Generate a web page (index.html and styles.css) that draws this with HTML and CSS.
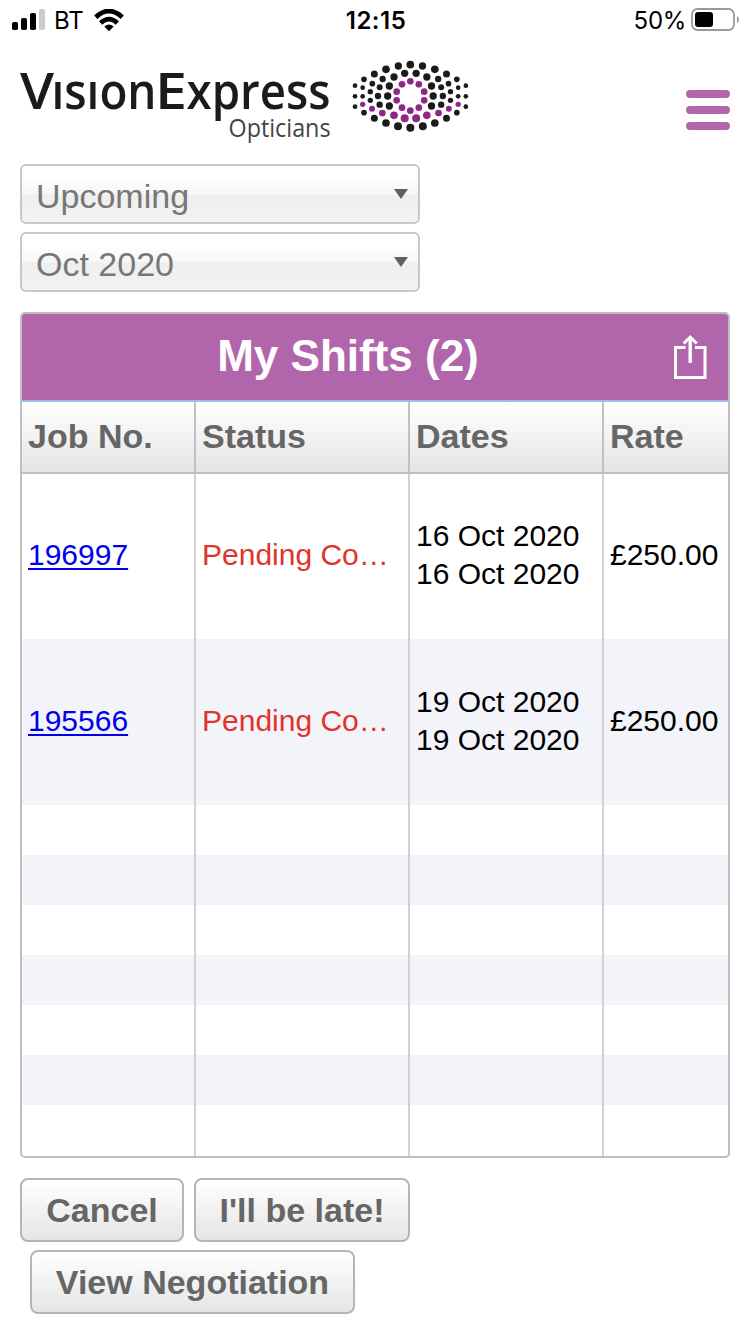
FILE: index.html
```html
<!DOCTYPE html>
<html lang="en">
<head>
<meta charset="utf-8">
<title>My Shifts</title>
<link rel="stylesheet" href="styles.css">
</head>
<body>
<div class="status-bar">
  <div class="carrier">
    <svg class="signal" width="34" height="22" viewBox="0 0 34 22">
      <rect x="0" y="13" width="6" height="8" rx="1.8"/>
      <rect x="9" y="9" width="6" height="12" rx="1.8"/>
      <rect x="18" y="4" width="6" height="17" rx="1.8"/>
      <rect x="27" y="0" width="6" height="21" rx="1.8" fill="#ccc"/>
    </svg>
    <span class="carrier-name">BT</span>
    <svg class="wifi" width="30" height="23" viewBox="0 0 30 23">
      <path d="M1.800 8.200 Q15 -4 28.200 8.200" fill="none" stroke="#000" stroke-width="4.800"/>
      <path d="M6.600 14 Q15 6.400 23.400 14" fill="none" stroke="#000" stroke-width="4.600"/>
      <path d="M10.300 17.600 Q15 13.600 19.700 17.600 L15 22.300 Z"/>
    </svg>
  </div>
  <span class="clock">12:15</span>
  <div class="power">
    <span class="percent">50%</span>
    <svg class="battery" width="49" height="24" viewBox="0 0 49 24">
      <rect x="1" y="1" width="42" height="21" rx="5.500" fill="none" stroke="#999" stroke-width="1.800"/>
      <rect x="4" y="4" width="18" height="15" rx="3"/>
      <path d="M46 8 Q48 9 48 11.500 Q48 14 46 15 Z" fill="#999"/>
    </svg>
  </div>
</div>

<header class="brand-bar">
  <svg class="brand" width="460" height="95" viewBox="0 0 460 95">
    <g class="brand-name">
      <text x="10" y="54" textLength="34" lengthAdjust="spacingAndGlyphs">V</text>
      <text x="41.500" y="54" textLength="105" lengthAdjust="spacingAndGlyphs">ısıon</text>
      <text x="145" y="54" textLength="32" lengthAdjust="spacingAndGlyphs">E</text>
      <text x="176.500" y="54" textLength="144" lengthAdjust="spacingAndGlyphs">xpress</text>
    </g>
    <text class="brand-sub" x="218.500" y="81.500" textLength="102" lengthAdjust="spacingAndGlyphs">Opticians</text>
    <defs>
      <g id="eye-half">
        <g fill="#1c1b1c">
          <circle cx="160" cy="33" r="11"/><circle cx="123" cy="43" r="11.500"/><circle cx="88" cy="57" r="10.500"/>
          <circle cx="57" cy="73" r="8.500"/><circle cx="30" cy="92" r="7"/><circle cx="30" cy="124" r="7"/>
          <circle cx="30" cy="155" r="7"/><circle cx="57" cy="173" r="8.500"/><circle cx="88" cy="190" r="10.500"/>
          <circle cx="123" cy="204" r="11.500"/><circle cx="159" cy="214" r="12"/>
          <circle cx="179" cy="55" r="11"/><circle cx="147" cy="66" r="11"/><circle cx="113" cy="72" r="9.500"/>
          <circle cx="82" cy="86" r="8.500"/><circle cx="53" cy="98" r="7"/><circle cx="53" cy="124" r="7"/>
          <circle cx="133" cy="93" r="11"/><circle cx="104" cy="97" r="9"/><circle cx="76" cy="110" r="8"/>
          <circle cx="99" cy="123" r="9.500"/><circle cx="128" cy="123" r="11"/><circle cx="76" cy="136" r="8"/>
          <circle cx="104" cy="149" r="9.500"/><circle cx="133" cy="153" r="11"/>
        </g>
        <g fill="#8d2885">
          <circle cx="53" cy="148" r="8"/><circle cx="81" cy="161" r="9"/><circle cx="112" cy="174" r="10"/>
          <circle cx="147" cy="181" r="11.500"/><circle cx="179" cy="190" r="12"/>
          <circle cx="171" cy="88" r="10"/><circle cx="155" cy="110" r="10"/>
          <circle cx="155" cy="136" r="10"/><circle cx="171" cy="158" r="10"/>
        </g>
      </g>
    </defs>
    <g transform="translate(335 0) scale(.33333)">
      <use href="#eye-half"/>
      <use href="#eye-half" transform="translate(392.500 0) scale(-1 1)"/>
      <circle cx="196" cy="29" r="11.500" fill="#1c1b1c"/><circle cx="196" cy="218" r="12" fill="#1c1b1c"/>
      <circle cx="196" cy="79" r="10" fill="#8d2885"/><circle cx="196" cy="167" r="10" fill="#8d2885"/>
    </g>
  </svg>
  <div class="menu"><i></i><i></i><i></i></div>
</header>

<div class="filters">
  <div class="select"><span>Upcoming</span><b class="caret"></b></div>
  <div class="select"><span>Oct 2020</span><b class="caret"></b></div>
</div>

<section class="panel">
  <div class="panel-title">
    <h1>My Shifts (2)</h1>
    <svg class="share" width="34" height="46" viewBox="0 0 34 46" fill="none" stroke="#fff" stroke-width="3">
      <path d="M11.500 13.500 H1.500 V43.500 H31 V13.500 H21"/>
      <path d="M16.200 29 V3" stroke-width="3.400"/>
      <path d="M9.700 9.500 L16.200 3 L22.700 9.500"/>
    </svg>
  </div>
  <div class="row head"><div>Job No.</div><div>Status</div><div>Dates</div><div>Rate</div></div>
  <div class="row shift">
    <div><a href="#">196997</a></div><div class="pending">Pending Co…</div>
    <div class="dates"><span>16 Oct 2020</span><span>16 Oct 2020</span></div><div class="rate">£250.00</div>
  </div>
  <div class="row shift alt">
    <div><a href="#">195566</a></div><div class="pending">Pending Co…</div>
    <div class="dates"><span>19 Oct 2020</span><span>19 Oct 2020</span></div><div class="rate">£250.00</div>
  </div>
  <div class="row blank"><div></div><div></div><div></div><div></div></div>
  <div class="row blank alt"><div></div><div></div><div></div><div></div></div>
  <div class="row blank"><div></div><div></div><div></div><div></div></div>
  <div class="row blank alt"><div></div><div></div><div></div><div></div></div>
  <div class="row blank"><div></div><div></div><div></div><div></div></div>
  <div class="row blank alt"><div></div><div></div><div></div><div></div></div>
  <div class="row blank last"><div></div><div></div><div></div><div></div></div>
</section>

<div class="actions">
  <button class="btn cancel">Cancel</button>
  <button class="btn late">I'll be late!</button>
  <button class="btn negotiate">View Negotiation</button>
</div>
</body>
</html>
```
FILE: styles.css
```css
* { box-sizing: border-box; }
body {
  margin: 0;
  width: 750px;
  height: 1334px;
  overflow: hidden;
  background: #fff;
  font-family: "Liberation Sans", Arial, sans-serif;
}

.status-bar {
  display: grid;
  grid-template-columns: 1fr auto 1fr;
  align-items: center;
  height: 40px;
  padding: 1px 10px 0 12px;
  font: 24px/40px Inter, sans-serif;
  color: #000;
}
.carrier, .power { display: flex; align-items: center; }
.carrier-name { margin-left: 8px; }
.wifi { margin: 0 0 2px 10px; }
.signal { margin-bottom: 2px; }
.clock { font-weight: 600; letter-spacing: .5px; }
.power { justify-content: flex-end; }
.percent { letter-spacing: -.3px; }
.battery { margin: 0 0 2px 5px; }

.brand-bar {
  display: flex;
  justify-content: space-between;
  height: 124px;
  padding: 15px 20px 0 10px;
}
.brand-name {
  font: 600 51px "Open Sans", sans-serif;
  fill: #1c1b1c;
}
.brand-sub { font: 25px "Open Sans", sans-serif; fill: #444; }
.menu { display: flex; flex-direction: column; gap: 8px; padding-top: 35px; }
.menu i { width: 44px; height: 8px; border-radius: 4px; background: #b166ab; }

.filters { display: flex; flex-direction: column; gap: 8px; padding-left: 20px; }
.select {
  display: flex;
  justify-content: space-between;
  align-items: center;
  width: 400px;
  height: 60px;
  padding: 4px 10px 0 14px;
  border: 2px solid #c8c8c8;
  border-radius: 6px;
  background: linear-gradient(#fff 20%, #f6f6f6 50%, #eee 52%, #f3f3f3 100%);
  font-size: 34px;
  color: #777;
}
.caret {
  margin-bottom: 5px;
  border: 7px solid transparent;
  border-top: 10px solid #606060;
  border-bottom: 0;
}

.panel {
  width: 710px;
  height: 846px;
  margin: 20px 0 0 20px;
  border: 2px solid #bfbfbf;
  border-radius: 5px;
  overflow: hidden;
}
.panel-title {
  display: flex;
  align-items: center;
  height: 88px;
  padding-right: 20px;
  border-bottom: 2px solid #9dbbe3;
  background: #b166ab;
  color: #fff;
}
.panel-title h1 {
  flex: 1;
  margin: 0 0 3px;
  font-size: 44px;
  line-height: 50px;
  text-align: center;
}
.row { display: grid; grid-template-columns: 174px 214px 194px 124px; }
.row > div {
  display: flex;
  align-items: center;
  padding-left: 6px;
  border-right: 2px solid #d2d2d2;
  white-space: nowrap;
}
.row > div:last-child { border-right: 0; }
.head {
  height: 72px;
  border-bottom: 2px solid #c1c1c1;
  background: linear-gradient(#fff, #e5e5e5);
  font-size: 34px;
  font-weight: bold;
  color: #666;
}
.head > div { padding-bottom: 2px; border-color: #c1c1c1; }
.shift { height: 165px; font-size: 30px; }
.shift > div { padding-bottom: 4px; }
.shift.alt { height: 166px; }
.shift.alt > div { padding-bottom: 3px; }
.alt { background: #f3f4f9; }
.row a { color: #00e; text-decoration: underline 2px; text-underline-offset: 3px; }
.row .pending { color: #e2332b; }
.row .dates {
  flex-direction: column;
  align-items: flex-start;
  justify-content: center;
  line-height: 38px;
}
.blank { height: 50px; }
.last { height: 51px; }

.actions { display: flex; flex-wrap: wrap; gap: 8px 10px; padding: 20px 20px 0; }
.btn {
  height: 64px;
  padding: 0;
  border: 2px solid #b5b5b5;
  border-radius: 8px;
  background: linear-gradient(#fff, #e5e5e5);
  font: bold 34px "Liberation Sans", Arial, sans-serif;
  color: #666;
}
.cancel { width: 164px; }
.late { width: 216px; margin-right: 200px; }
.negotiate { width: 325px; margin-left: 10px; }
```
